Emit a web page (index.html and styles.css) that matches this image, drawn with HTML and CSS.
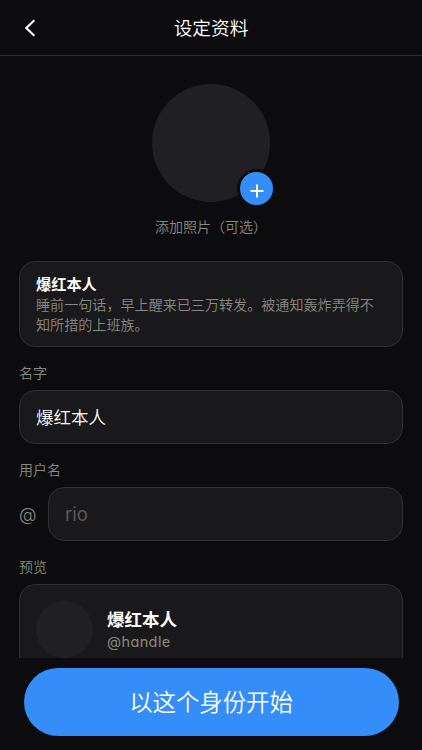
FILE: index.html
```html
<!DOCTYPE html>
<html lang="zh-CN">
<head>
<meta charset="utf-8">
<title>设定资料</title>
<link rel="stylesheet" href="styles.css">
</head>
<body>
<div class="app">
  <header class="topbar">
    <button class="back" aria-label="返回">
      <svg width="12" height="18" viewBox="0 0 12 18"><path d="M10.3 1.2 2.3 9l8 7.8"/></svg>
    </button>
    <h1>设定资料</h1>
  </header>
  <main class="content">
    <div class="photo">
      <button class="add" aria-label="添加照片">
        <svg width="14" height="14" viewBox="0 0 14 14"><path d="M7 .5v13M.5 7h13"/></svg>
      </button>
    </div>
    <p class="caption">添加照片（可选）</p>
    <section class="card persona">
      <h2>爆红本人</h2>
      <p>睡前一句话，早上醒来已三万转发。被通知轰炸弄得不知所措的上班族。</p>
    </section>
    <label class="label" for="name">名字</label>
    <input class="card field" id="name" value="爆红本人">
    <label class="label" for="handle">用户名</label>
    <div class="handle-row">
      <span class="at">@</span>
      <input class="card field" id="handle" placeholder="rio">
    </div>
    <div class="label">预览</div>
    <section class="card preview">
      <div class="avatar"></div>
      <div class="identity">
        <strong>爆红本人</strong>
        <span>@handle</span>
      </div>
    </section>
  </main>
  <footer class="bottom"><button class="start">以这个身份开始</button></footer>
</div>
</body>
</html>
```
FILE: styles.css
```css
* { box-sizing: border-box; }
body {
  margin: 0;
  background: #0c0c0e;
  color: #fff;
  font-family: Inter, "Noto Sans CJK SC", sans-serif;
  font-weight: 350;
  font-feature-settings: "cv11";
}
button, input { font: inherit; font-feature-settings: inherit; color: inherit; border: 0; padding: 0; }
h1, h2, p { margin: 0; }
.app { height: 750px; display: flex; flex-direction: column; overflow: hidden; }
.topbar {
  flex: none;
  height: 56px;
  display: grid;
  grid-template-columns: 60px 1fr 60px;
  align-items: center;
  border-bottom: 1px solid #2c2c2e;
}
.back { display: flex; justify-content: center; background: none; }
svg { display: block; fill: none; stroke: #fff; }
.back svg { stroke-width: 2.1; }
h1 { font-size: 18.7px; line-height: 28px; font-weight: 350; text-align: center; padding-top: 2px; }
.content {
  flex: 1;
  min-height: 0;
  overflow: hidden;
  padding: 28px 19px 0;
  display: flex;
  flex-direction: column;
}
.content > * { flex: none; }
.photo {
  position: relative;
  width: 118px;
  height: 118px;
  border-radius: 50%;
  background: #202024;
  align-self: center;
}
.add {
  position: absolute;
  right: -6px;
  bottom: -6px;
  width: 39px;
  height: 39px;
  border: 3px solid #0c0c0e;
  border-radius: 50%;
  background: #348df8;
  display: flex;
  align-items: center;
  justify-content: center;
  padding-top: 5px;
}
.add svg { stroke-width: 2; }
.caption { margin-top: 15px; font-size: 14px; line-height: 20px; text-align: center; color: #8a8982; }
.card { background: #19191b; border: 1px solid #303032; border-radius: 16px; }
.persona { height: 86px; margin-top: 24px; padding: 12px 16px; }
h2 { font-size: 15.2px; line-height: 21px; font-weight: 700; }
.persona p { font-size: 14.08px; line-height: 19.7px; color: #8a8982; }
.label { display: block; height: 20px; margin: 16px 0 7px; font-size: 14px; line-height: 20px; color: #8a8982; }
.field { width: 100%; height: 54px; padding: 0 16px 2px; font-size: 17.5px; outline: none; }
.field::placeholder { color: #5a5a58; opacity: 1; }
#handle { padding: 0 16px; font-size: 18.5px; font-weight: 400; }
.handle-row { display: flex; align-items: center; }
.at { width: 29px; flex: none; font-size: 18px; color: #8a8982; }
.preview { height: 96px; display: flex; padding: 16px; }
.avatar { width: 57px; height: 57px; border-radius: 50%; background: #202024; margin-right: 14px; }
.identity { display: flex; flex-direction: column; padding-top: 6px; }
.identity strong { font-size: 17.5px; line-height: 25px; font-weight: 700; }
.identity span { font-size: 14.5px; line-height: 20px; font-weight: 400; letter-spacing: .4px; color: #8a8982; }
.bottom { flex: none; height: 92px; padding: 10px 23.5px 14px; }
.start { width: 100%; height: 68px; border-radius: 34px; background: #348df8; font-size: 23.4px; padding: 0 0 2px; }
```
